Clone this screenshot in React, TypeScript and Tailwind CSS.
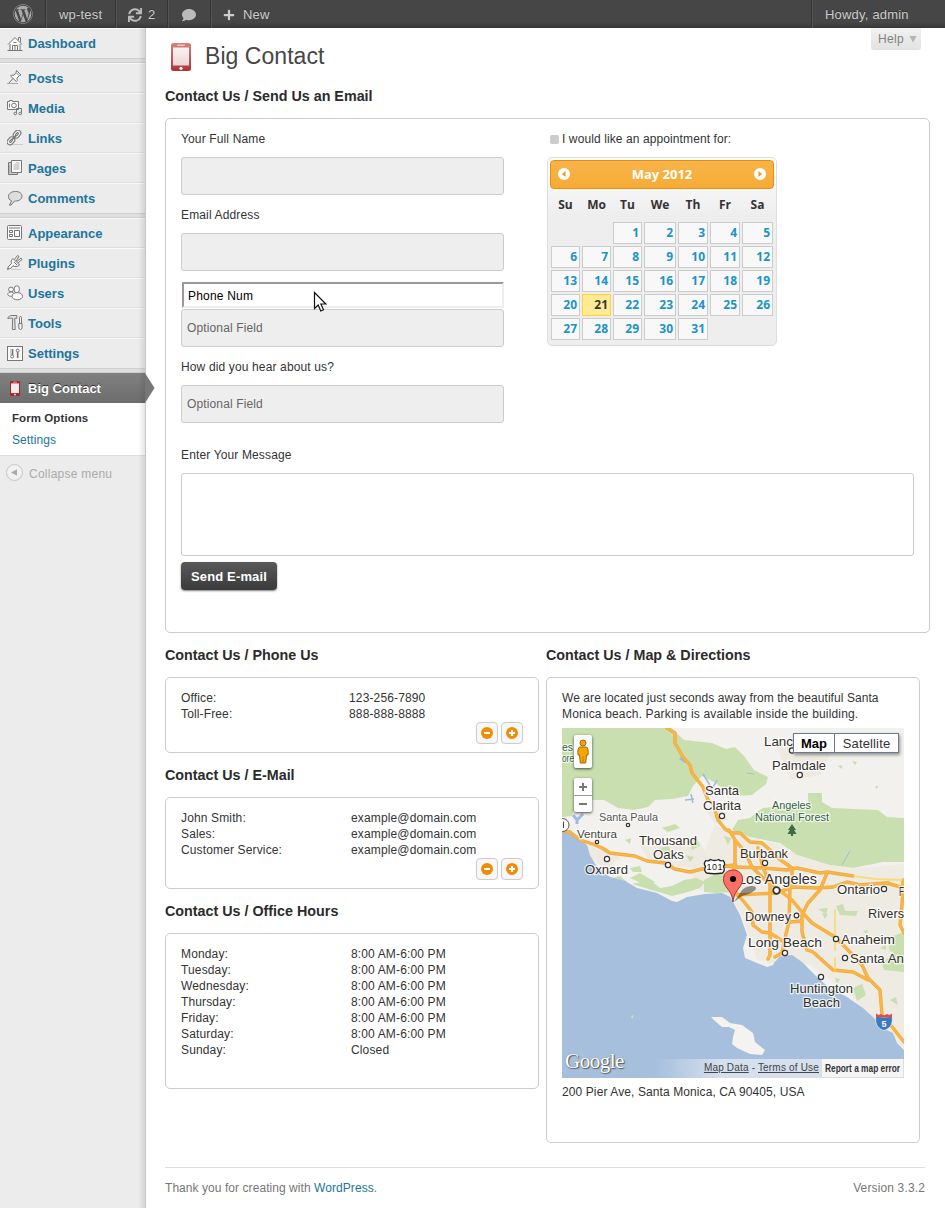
import React from "react";
import { FaWordpress, FaComment, FaPlus, FaSync } from "react-icons/fa";

type IconName =
  | "home" | "pin" | "media" | "link" | "pages" | "comment"
  | "appearance" | "plug" | "users" | "tools" | "settings";

const icons: Record<IconName, React.ReactNode> = {
  home: (
    <>
      <path d="M1 8.5 8 1.5l7 7M3 8v6.5h10V8M11.5 4.5v-3h2v5" fill="#fafafa" />
      <path d="M5.5 14.5v-5h5v5M8 9.5v5M6.5 6.500h3M0.500 14.500h15" />
    </>
  ),
  pin: (
    <>
      <path d="M9.500 .500 14 5l-1.500.5-2.500 2.500.3 2.500-1 1L3.500 6l1-1 2.500.3L9 2.500z" fill="#fafafa" />
      <path d="M6 8.500 1.500 13.500M9.500 3l2.500 2.500" />
      <path d="M0 13.500h11" stroke="#aaa" />
    </>
  ),
  media: (
    <>
      <path d="M0.500 1.500h2v-1h3v1h6v8h-11z" fill="#fafafa" />
      <circle cx="7" cy="5.500" r="2.300" />
      <path d="M2.500 3.500v4M9.500 13.500v-5h5v5" />
      <circle cx="8.200" cy="13.500" r="1.300" fill="#eee" />
      <circle cx="13.200" cy="13.500" r="1.300" fill="#eee" />
    </>
  ),
  link: (
    <>
      <path d="M5 14.500h11" stroke="#ccc" />
      <g transform="translate(-1 -.5) rotate(-48 8 8)" fill="#f5f5f5" strokeWidth="1.100">
        <rect x="-.8" y="5" width="8.500" height="6" rx="3" />
        <rect x="1.700" y="7.200" width="3.600" height="1.600" rx=".8" />
        <rect x="8.300" y="5" width="8.500" height="6" rx="3" />
        <rect x="10.700" y="7.200" width="3.600" height="1.600" rx=".8" />
        <path d="M5 8h6" strokeWidth="1.600" />
      </g>
    </>
  ),
  pages: (
    <>
      <path d="M4.500 2.500h-3v12h9v-2" fill="#ccc" />
      <path d="M4.500 0.500h10v12h-10z" fill="#fafafa" />
      <path d="M8.500 3h4M6.500 5h6M6.500 7h6M6.500 9h6M2.800 5v8" stroke="#aaa" />
    </>
  ),
  comment: (
    <path d="M8.500 .500c4 0 6.500 2 6.500 4.700S12.500 10 8.500 10l-1 .1-3.500 4h-1.500l2-4.300C2.300 8.800 1.500 7.500 1.500 5.200c0-2.700 3-4.700 7-4.700z" fill="#dedede" />
  ),
  appearance: (
    <>
      <rect x="0.500" y="0.500" width="14" height="14" rx="1" fill="#fafafa" />
      <path d="M2 3h11M2.500 5.500h3v2h-3zM2.500 9.500h3v2h-3zM7.500 5.500h5v6h-5z" />
    </>
  ),
  plug: (
    <>
      <path d="M4 14.500h10" stroke="#ccc" />
      <path d="M6 3.500 12.500 10c-2 2-5 2-6.500.8L3.500 13.500l-2.500.500L1 12l3.500-3.500C3.500 6.500 4.300 5.300 6 3.500z" fill="#f3f3f3" />
      <path d="m7.500 4.500 3-4 1.500 1-3 4.700M11 8l4-3.500-1-1.500-4 3.500M7 7l3 3M0 15l1.500-2" />
    </>
  ),
  users: (
    <>
      <circle cx="4" cy="4.500" r="2.400" fill="#fafafa" />
      <path d="M.8 9.500C.8 8 2 7 4.500 7S7 9 7 10.500s-6.200 1-6.200-1z" fill="#fafafa" />
      <rect x="7.300" y=".8" width="5" height="7" rx="2.500" fill="#fafafa" />
      <ellipse cx="10.300" cy="11.200" rx="5.300" ry="3.600" fill="#fafafa" />
    </>
  ),
  tools: (
    <>
      <path d="M.8 3.500c.5-2 2-3 4-3h5v2.800H7.700l.5 11.200H5.300l.4-11.200C4 3 2.500 3 .8 3.500z" fill="#e4e4e4" />
      <path d="M12.500 8V2.500l1-1.500 1 1.500V8M11.800 8.500h3.200v5l-1.500 1-1.700-1z" fill="#f4f4f4" />
    </>
  ),
  settings: (
    <>
      <rect x="0.500" y="0.500" width="15" height="14" fill="#fafafa" />
      <path d="M5.500 3v6M10.700 6v6" strokeWidth="1.700" />
      <circle cx="5.200" cy="10.500" r="1.500" />
      <circle cx="10.700" cy="4.500" r="1.500" />
      <path d="M3.500 3v6" stroke="#ccc" />
    </>
  ),
};

function MenuIcon({ name }: { name: IconName }) {
  return (
    <svg width="16" height="16" viewBox="0 0 16 16" fill="none" stroke="#777" strokeWidth="1">
      {icons[name]}
    </svg>
  );
}

function PhoneIcon({ w, h }: { w: number; h: number }) {
  return (
    <svg width={w} height={h} viewBox="0 0 20 28" preserveAspectRatio="none">
      <defs>
        <linearGradient id="phoneBody" x1="0" y1="0" x2="0" y2="1">
          <stop offset="0" stopColor="#d48280" />
          <stop offset="1" stopColor="#ae3336" />
        </linearGradient>
        <linearGradient id="phoneScreen" x1="0" y1="0" x2="0" y2="1">
          <stop offset="0" stopColor="#fbf3f3" />
          <stop offset="1" stopColor="#ecd5d5" />
        </linearGradient>
      </defs>
      <rect width="20" height="28" rx="2.500" fill={w > 15 ? "url(#phoneBody)" : "#a5282b"} />
      <rect x="2" y="4.500" width="16" height="18" fill={w > 15 ? "url(#phoneScreen)" : "#f5ecec"} />
      <rect x="6" y="1.500" width="8" height="1.500" rx=".7" fill="#ecc6c6" />
      <circle cx="10" cy="25.300" r="1.600" fill="#fff" />
    </svg>
  );
}

const Gap = () => (
  <div className="h-[5px] border-y border-[#cfcfcf] bg-[#dfdfdf]" />
);

function MenuGroup({ items }: { items: [IconName, string][] }) {
  return (
    <ul>
      {items.map(([icon, label], i) => (
        <li
          key={label}
          className={
            "flex h-[30px] items-center border-t border-t-[#f9f9f9] pl-[7px] " +
            (i < items.length - 1 ? "border-b border-b-[#dfdfdf]" : "")
          }
        >
          <MenuIcon name={icon} />
          <span className="mt-px ml-[5px] text-[13px] leading-4 font-bold tracking-normal text-[#21759b]">{label}</span>
        </li>
      ))}
    </ul>
  );
}

function Sidebar() {
  return (
    <nav className="relative w-[146px] shrink-0 border-r border-[#c6c6c6] bg-[#ececec]">
      <MenuGroup items={[["home", "Dashboard"]]} />
      <Gap />
      <MenuGroup
        items={[["pin", "Posts"], ["media", "Media"], ["link", "Links"], ["pages", "Pages"], ["comment", "Comments"]]}
      />
      <Gap />
      <MenuGroup
        items={[["appearance", "Appearance"], ["plug", "Plugins"], ["users", "Users"], ["tools", "Tools"], ["settings", "Settings"]]}
      />
      <Gap />
      <div className="relative flex h-[30px] items-center bg-linear-to-b from-[#808080] to-[#6d6d6d] pl-[10px]">
        <PhoneIcon w={10} h={15} />
        <span className="mt-px ml-2 text-[13px] leading-4 font-bold tracking-normal text-white [text-shadow:0_-1px_0_#333]">Big Contact</span>
        <svg className="absolute top-0 left-[145px] z-10" width="10" height="30" viewBox="0 0 10 30">
          <path d="M0 0 9.500 15 0 30z" fill="#777" />
        </svg>
      </div>
      <div className="h-[53px] border-b border-[#dfdfdf] bg-white pt-[4px] pl-3 leading-[22px]">
        <div className="text-[11.500px] font-bold tracking-[0.080px] text-[#333]">Form Options</div>
        <div className="tracking-[0.080px] text-[#21759b]">Settings</div>
      </div>
      <div className="flex h-[34px] items-center pl-[6px]">
        <svg width="17" height="17" viewBox="0 0 17 17" className="mb-px">
          <circle cx="8.500" cy="8.500" r="8" fill="#f1f1f1" stroke="#c4c4c4" />
          <path d="M5 8.500 11 5.200v6.600z" fill="#aaa" />
        </svg>
        <span className="mt-px ml-[6px] tracking-[0.250px] text-[#aaa]">Collapse menu</span>
      </div>
      <div className="pointer-events-none absolute top-0 right-0 h-full w-[7px] bg-linear-to-r from-transparent to-black/10" />
    </nav>
  );
}

function AdminBar() {
  const sep = "flex h-full items-center border-r border-[#333] shadow-[1px_0_0_#555]";
  return (
    <header className="flex h-7 shrink-0 items-center bg-linear-to-b from-[#464646] from-80% to-[#373737] text-[13px] tracking-[0.200px] text-[#ccc] [text-shadow:0_-1px_0_#333]">
      <div className={sep + " w-[46px] justify-center"}>
        <FaWordpress size={20} color="#aaa" />
      </div>
      <div className={sep + " w-[70px] pl-[13px] pt-px"}>wp-test</div>
      <div className={sep + " w-[52px] gap-[6px] pl-3 pt-px"}>
        <FaSync size={14} color="#bbb" />2
      </div>
      <div className={sep + " w-[43px] justify-center pt-px"}>
        <FaComment size={14} color="#bbb" />
      </div>
      <div className="flex items-center gap-2 pt-px pl-[12px]">
        <FaPlus size={12} color="#ccc" />New
      </div>
      <div className="ml-auto flex h-full w-[133px] items-center border-l border-[#555] pt-px pl-3 shadow-[-1px_0_0_#333]">
        Howdy, admin
      </div>
    </header>
  );
}

const H = ({ children }: { children: React.ReactNode }) => (
  <h3 className="h-[22px] text-[15px] leading-[22px] font-bold tracking-normal whitespace-nowrap text-[#2b2b2b]">
    <span className="inline-block origin-left scale-x-[.954]">{children}</span>
  </h3>
);

const field =
  "block h-[38px] w-[323px] rounded-[3px] border border-[#ccc] bg-[#eee] px-[5px] text-[#555] tracking-[0.130px] placeholder:text-[#666] placeholder:opacity-100";
const label = "block h-4 leading-4 text-[#333]";

const weeks: (number | null)[] = [null, null, ...Array.from({ length: 31 }, (_, i) => i + 1)];

function Arrow({ flip }: { flip?: boolean }) {
  return (
    <svg width="12" height="12" viewBox="0 0 12 12" className={flip ? "mb-px rotate-180" : "mb-px"}>
      <circle cx="6" cy="6" r="6" fill="#fff" />
      <path d="M7.500 3v6L4 6z" fill="#f2980f" />
    </svg>
  );
}

const cols = "grid grid-cols-[29px_29px_29px_32px_30px_30px_31px] gap-x-[2px]";

function Calendar() {
  return (
    <div className="h-[189px] w-[230px] rounded-[5px] border border-[#ddd] bg-linear-to-b from-[#fff] to-[#eee] to-30% p-[2px] font-[Open_Sans,sans-serif] font-bold tracking-normal">
      <div className="flex h-[29px] items-center justify-between rounded-[4px] border border-[#e78f08] bg-linear-to-b from-[#f8b44a] to-[#f6ab34] px-[7px] text-[13px] text-white">
        <Arrow />
        <span>May 2012</span>
        <Arrow flip />
      </div>
      <div className={cols + " mt-[5px] h-[22px] pl-px text-center text-[12px] leading-[22px] text-[#333]"}>
        {["Su", "Mo", "Tu", "We", "Th", "Fr", "Sa"].map((d) => (
          <span key={d}>{d}</span>
        ))}
      </div>
      <div className={cols + " mt-[6px] gap-y-[2px] pl-px text-right text-[12px] leading-[20px]"}>
        {weeks.map((d, i) =>
          d === null ? (
            <span key={"e" + i} />
          ) : d === 21 ? (
            <span key={d} className="h-[22px] border border-[#fed22f] bg-[#ffeb95] pr-[2px] text-[#363636]">{d}</span>
          ) : (
            <span key={d} className="h-[22px] border border-[#ccc] bg-[#f8f8f8] pr-[2px] text-[#1c94c4]">{d}</span>
          )
        )}
      </div>
    </div>
  );
}

function PlusMinus() {
  const btn = "flex h-[22px] w-[22px] items-center justify-center rounded-[4px] border border-[#ccc] bg-[#f7f7f7]";
  return (
    <div className="-mr-[15px] flex justify-end gap-[3px] pr-[15px]">
      {["M3 6h6", "M3 6h6M6 3v6"].map((d) => (
        <span key={d} className={btn}>
          <svg width="12" height="12" viewBox="0 0 12 12">
            <circle cx="6" cy="6" r="6" fill="#ef8c08" />
            <path d={d} stroke="#fff" strokeWidth="2" />
          </svg>
        </span>
      ))}
    </div>
  );
}

function Rows({ rows, first }: { rows: [string, string][]; first: string }) {
  return (
    <dl className="leading-4">
      {rows.map(([a, b]) => (
        <div key={a} className="flex">
          <dt className={first}>{a}</dt>
          <dd>{b}</dd>
        </div>
      ))}
    </dl>
  );
}

const panel = "rounded-[5px] border border-[#ccc] px-[15px] pt-3";

const roads = [
  "M667 728 675 733 675 743 683 757 690 765 692 773 703 787 708 800 713 804 718 820 725 829 732 833",
  "M562 831 570 832 580 840 593 844 602 848 610 853 635 856 647 861 665 863 675 869 690 872 702 869 725 866 735 867",
  "M732 833 740 833 750 842 762 843 770 850 778 858 792 868 792 877 790 888 789 922 785 938 782 953 775 957",
  "M729 830 735 840 735 865 731 885 738 895 745 903 752 912 753 925 762 932 770 933 784 942",
  "M735 840 745 852 752 867 762 877 775 887 783 893 792 900 802 912 812 923 835 937 848 950 862 965 868 978 880 990 882 1015 893 1028 904 1042",
  "M735 867 763 868 787 870 797 868 820 873 827 872 853 876",
  "M737 895 775 893 785 890 792 887 817 888 833 887 847 882 860 885 887 883 904 888",
  "M758 848 763 867 770 885 770 955 768 959",
  "M827 873 820 890 808 903 802 915 802 932 807 950 813 952 833 970 853 972 868 980",
  "M790 922 802 921M735 865 725 866M903 880 902 905 900 925 904 933",
];

type Place = [string, number, number, number, number?, string?];
const places: Place[] = [
  ["Lanc", 764, 745.500, 29],
  ["Palmdale", 772, 769.5, 54],
  ["Santa", 705, 795, 34],
  ["Clarita", 703, 810, 38],
  ["Angeles", 772, 808.5, 39, 11, "#2f6340"],
  ["National Forest", 755, 821, 74, 11, "#2f6340"],
  ["Santa Paula", 599, 821, 59, 11, "#555"],
  ["Ventura", 577, 838, 40, 11, "#444"],
  ["Thousand", 639, 844.5, 58],
  ["Oaks", 653, 858.5, 31],
  ["Oxnard", 585, 873.5, 43],
  ["Burbank", 740, 857.5, 48],
  ["Los Angeles", 738, 884, 79, 14],
  ["Ontario", 837, 893.5, 43],
  ["F", 899, 896, 5],
  ["Downey", 745, 920.5, 46],
  ["Rivers", 868, 917.5, 36],
  ["Long Beach", 748, 946.5, 74, 13.5],
  ["Anaheim", 841, 943.5, 54],
  ["Santa An", 850, 962.5, 54],
  ["Huntington", 790, 992.5, 63],
  ["Beach", 803, 1006.5, 37],
  ["es", 562, 750.500, 11, 11, "#2f6340"],
  ["ore", 562, 762, 12, 11, "#2f6340"],
];

const dots: [number, number, number][] = [
  [792, 750.5, 2.6], [799.800, 775, 2.6], [722, 816, 2.6], [628, 825, 1.700], [597, 842, 1.700], [607, 859, 2.6],
  [668, 865, 2.6], [765, 863, 2.6], [776.500, 890.500, 3.3], [884, 889, 2.6], [796.500, 915.500, 2.3], [785, 953, 2.6],
  [836, 939, 2.6], [845, 958, 2.6], [821, 977, 2.6],
];

const greens = [
  "M660 848 668 846 672 852 664 856ZM690 842 697 838 700 846 692 850ZM612 878 620 876 627 882 618 885ZM630 878 640 873 655 882 648 886Z",
  "M632 884 650 880 660 888 672 886 684 880 696 878 705 882 700 888 688 892 672 896 655 891Z",
  "M704 880 714 875 722 872 730 878 733 884 732 892 716 893 704 892ZM724 836 731 838 728 845ZM686 855 694 857 690 862ZM630 868 640 866 642 872 633 872ZM625 840 631 838 630 844ZM662 828 675 824 680 828 668 832Z",
  "M808 793 822 793 822 802 832 808 878 810 887 817 904 818 904 862 883 862 853 868 830 865 797 855 780 843 750 837 732 830 738 820 750 818 757 812 763 808 808 803Z",
  "M836 906 843 904 845 911 858 911 856 916 840 915ZM818 909 828 908 826 914ZM802 875 808 876 806 880ZM822 913 828 914 825 919ZM880 882 890 880 888 886Z",
  "M888 938 904 932 904 972 884 970 882 963 892 955 889 948ZM853 988 862 984 866 995 857 1001ZM880 948 886 945 886 950ZM863 931 868 930 867 934ZM835 978 840 979 837 984Z",
  "M838 766 842 765 842 769ZM852 761 857 762 855 765ZM875 786 878 786 877 789ZM836 741 840 742 838 744ZM890 1000 896 997 898 1005Z",
];

function MapView() {
  return (
    <div className="relative h-[350px] w-[342px] overflow-hidden tracking-normal">
      <svg width="342" height="350" viewBox="562 728 342 350" className="block font-[Liberation_Sans,Arial,sans-serif]">
        <rect x="562" y="728" width="342" height="350" fill="#f3f1ed" />
        <path d="M562 728H671L684 740 712 743 726 749 735 747 744 756 754 770 768 777 766 784 752 795 737 796 725 790 714 782 702 776 693 786 688 796 672 799 655 800 648 807 634 810 618 808 604 800 592 800 575 806 572 816 562 817Z" fill="#c9dfaf" />
        <path d="M715 825 730 832 750 838 780 844 800 857 850 869 904 864 904 1048 880 1025 850 995 810 965 757 960 740 910 722 892 700 890 690 870 705 850Z" fill="#eeebe2" />
        <path d="M640 846 700 842 710 860 690 868 650 862ZM580 840 604 846 620 858 605 870 592 858ZM776 745 806 740 830 755 820 775 790 780ZM706 810 722 806 728 820 715 824Z" fill="#eeeae1" />
        {greens.map((d) => (
          <path key={d} d={d} fill="#c9dfaf" />
        ))}
        <path
          d="M562 831 570 832 580 840 587 845 590 855 597 867 610 877 625 881 637 888 657 893 672 901 677 902 687 897 705 894 722 893 730 897 733 902 740 915 747 935 743 948 745 958 757 963 767 967 773 965 777 957 792 955 802 962 812 972 820 980 830 988 847 997 863 1008 873 1017 882 1028 893 1033 897 1043 904 1050V1078H562Z"
          fill="#a5bfdd"
        />
        <path d="M764 958 770 960 774 955 780 956 776 961 769 965Z" fill="#ece9df" />
        <path d="M711 1017 722 1017 730 1023 742 1025 753 1033 755 1042 765 1050 762 1055 750 1054 737 1048 732 1044 733 1037 735 1030 729 1027 722 1027 716 1022Z" fill="#f4f3ef" />
        <path d="M631 1016 634 1015 632 1019Z" fill="#c9dfaf" />
        <g fill="none" stroke="#9dbbe0">
          <path d="M573 815 578 821M583 814 577 820 577 824M680 758 686 762" strokeWidth="3" />
          <path d="M703 774 708 782 712 789 717 780M711 789 708 793M685 800 694 799M691 794 693 803" strokeWidth="1.500" />
          <path d="M842 865 850 851M747 773 754 774" strokeWidth="1" />
        </g>
        <g fill="none" strokeLinejoin="round" strokeLinecap="round">
          {roads.map((d) => (
            <path key={d} d={d} stroke="#e9a94a" strokeWidth="3.400" />
          ))}
          <path d="M853 876 875 879 904 880M835 910V950M835 958V972" stroke="#f8dc7c" strokeWidth="1.800" />
          {roads.map((d) => (
            <path key={"i" + d} d={d} stroke="#fdb53f" strokeWidth="2.200" />
          ))}
        </g>
        <path d="M792 824 796 830h-2l2.500 4H787.500l2.500-4h-2zM791 834h2v2h-2z" fill="#3f6b4a" />
        {places.map(([t, x, y, w, size, color]) => (
          <text
            key={t + y}
            x={x}
            y={y}
            textLength={w}
            lengthAdjust="spacingAndGlyphs"
            fontSize={size ?? 13}
            fill={color ?? "#33302e"}
            stroke="#fff"
            strokeOpacity=".75"
            strokeWidth="2.500"
            paintOrder="stroke"
          >
            {t}
          </text>
        ))}
        {dots.map(([x, y, r]) => (
          <circle key={x + "-" + y} cx={x} cy={y} r={r} fill="#fff" stroke="#333" strokeWidth={r > 3 ? 1.800 : 1.200} />
        ))}
        <path d="M706 860.500q2.500 1 4.500-1 4 2 8 0 2 2 4.500 1 3 3 .5 6 2 4-1 6.500-8 1.500-16 0-3-2.500-1-6.500-2.500-3 .5-6z" fill="#fff" stroke="#222" strokeWidth="1.300" />
        <text x="706.500" y="870" fontSize="9" textLength="16" fill="#222">101</text>
        <rect x="552" y="818.500" width="17" height="13" rx="6.500" fill="#fff" stroke="#555" />
        <path d="M563.500 821.500v6.500" stroke="#444" />
        <path d="M876 1016c5 1.500 11 1.500 16 0 1 6 0 12-8 14.500-8-2.500-9-8.500-8-14.500z" fill="#3a78c4" stroke="#fff" strokeWidth=".6" />
        <path d="M876 1017.500v-4l2.500 1.500 2.500-1 3 1.500 3-1.500 2.500 1 2.500-1.500v4z" fill="#d8504d" />
        <text x="881.500" y="1026.500" fontSize="9" fontWeight="bold" fill="#fff">5</text>
        <path d="M734 902 742 890c5-5 14-5 14-2s-8 7-14 8z" fill="#000" opacity=".4" />
        <path d="M733 902c-1-8-3-10-6-14-4-5-4-9-3-12 2-8 16-8 18 0 1 3 1 7-3 12-3 4-5 6-6 14z" fill="#fb7064" stroke="#9e3630" />
        <circle cx="733" cy="879" r="3" fill="#000" />
      </svg>
      <div className="absolute top-[7px] left-3 flex h-[33px] w-[18px] items-center justify-center rounded-[2px] bg-white shadow-[0_1px_3px_#444]">
        <svg width="12" height="26" viewBox="0 0 12 26">
          <path d="M2.500 8h7C11 9 11.500 12 11 16H9.500l-.8 8H3.300l-.8-8H1C.5 12 1 9 2.500 8z" fill="#f5a700" stroke="#a4650d" />
          <path d="M6 17v7" stroke="#c47d0a" />
          <circle cx="6" cy="4" r="3" fill="#f5a700" stroke="#a4650d" />
        </svg>
      </div>
      <div className="absolute top-[50px] left-3 flex h-[34px] w-[18px] flex-col rounded-[2px] bg-white shadow-[0_1px_3px_#444]">
        <svg width="18" height="34" viewBox="0 0 18 34">
          <path d="M5 9h8M9 5v8M5 26h8" stroke="#777" strokeWidth="2" />
          <path d="M0 17.500h18" stroke="#999" />
        </svg>
      </div>
      <div className="absolute top-[5px] right-[5px] flex h-5 border border-[#6b7a90] bg-white text-[13px] leading-[19px] text-[#333] shadow-[1px_2px_3px_rgba(0,0,0,.4)]">
        <span className="w-[41px] border-r border-[#6b7a90] text-center font-bold text-black">Map</span>
        <span className="w-[63px] text-center tracking-[0.150px]">Satellite</span>
      </div>
      <div className="absolute bottom-[5px] left-[3px] font-[Liberation_Serif,serif] text-[21px] leading-[24px] tracking-[-0.500px] text-white [text-shadow:1px_1px_1px_#555,0_0_1px_#777]">
        Google
      </div>
      <div className="absolute right-0 bottom-0 flex h-[19px] items-center text-[10px] leading-[18px] text-[#444]">
        <div className="h-full bg-linear-to-r from-transparent to-[#d5e0ee] to-40% pr-[3px] pl-[50px] tracking-[0.180px] whitespace-nowrap">
          <u>Map Data</u> - <u>Terms of Use</u>
        </div>
        <div className="flex h-full w-[82px] justify-center border-r border-b border-[#ddd] bg-[#f5f5f5]">
          <svg width="80" height="18">
            <text x="2" y="12.500" fontSize="10" fontWeight="bold" textLength="75" lengthAdjust="spacingAndGlyphs" fill="#333">Report a map error</text>
          </svg>
        </div>
      </div>
    </div>
  );
}

function ContactForm() {
  return (
    <section className="flex h-[515px] w-[765px] rounded-[5px] border border-[#ccc] px-[15px] pt-3">
      <form className="relative w-full">
        <div className="flex">
          <div className="w-[366px]">
            <label className={label}>Your Full Name</label>
            <input className={field + " mt-[10px]"} />
            <label className={label + " mt-3"}>Email Address</label>
            <input className={field + " mt-[10px]"} />
            <input
              defaultValue="Phone Num"
              className="mt-[11px] ml-px block h-[26px] w-[322px] border-2 border-t-[#999] border-r-[#eee] border-b-[#eee] border-l-[#999] bg-white px-1 pt-px tracking-[0.200px] text-black"
            />
            <input placeholder="Optional Field" className={field + " mt-px"} />
            <label className={label + " mt-3"}>How did you hear about us?</label>
            <input placeholder="Optional Field" className={field + " mt-[10px]"} />
          </div>
          <div>
            <div className="flex h-4 items-center pl-[3px] leading-4 tracking-[0.100px] text-[#333]">
              <span className="mr-[3px] h-[9px] w-[9px] rounded-[2px] bg-[#ccc]" />
              I would like an appointment for:
            </div>
            <div className="mt-[10px]">
              <Calendar />
            </div>
          </div>
        </div>
        <label className={label + " mt-6"}>Enter Your Message</label>
        <textarea className="mt-[10px] block h-[83px] w-[733px] resize-none rounded-[3px] border border-[#ccc] bg-white" />
        <button
          type="button"
          className="mt-[6px] block h-[28px] w-[96px] rounded-[4px] bg-linear-to-b from-[#5a5a5a] to-[#3a3a3a] pt-px text-[13px] font-bold tracking-[0.150px] whitespace-nowrap text-white shadow-[0_1px_2px_rgba(0,0,0,.5)]"
        >
          Send E-mail
        </button>
        <svg className="absolute top-[160px] left-[132px]" width="14" height="22" viewBox="0 0 14 22">
          <path d="M1.500 1.500v16l3.700-3.500 2.600 6 2.700-1.200-2.600-5.800h5z" fill="#fff" stroke="#111" strokeWidth="1.200" />
        </svg>
      </form>
    </section>
  );
}

const days = ["Monday:", "Tuesday:", "Wednesday:", "Thursday:", "Friday:", "Saturday:"];

export default function App() {
  return (
    <div className="flex h-[1208px] w-[945px] flex-col overflow-hidden bg-white font-[Liberation_Sans,Arial,sans-serif] text-[12px] tracking-[0.140px] text-[#333]">
      <AdminBar />
      <div className="flex flex-1">
        <Sidebar />
        <main className="relative flex-1 pl-[19px]">
          <div className="absolute top-0 right-6 h-[22px] w-[50px] rounded-b-[3px] bg-linear-to-b from-[#f1f1f1] to-[#e2e2e2] pl-[7px] leading-[22px] tracking-[0.300px] text-[#808080]">
            Help
            <svg className="absolute top-[7px] right-[4px]" width="8" height="8" viewBox="0 0 8 8">
              <path d="M.5 1h7L4 7.500z" fill="#b5b5b5" />
            </svg>
          </div>
          <div className="flex h-[57px] items-center pl-[6px] tracking-normal">
            <PhoneIcon w={20} h={28} />
            <h2 className="mb-px ml-[14px] text-[23px] leading-[34px] tracking-[0.050px] text-[#464646]">Big Contact</h2>
          </div>
          <H>Contact Us / Send Us an Email</H>
          <div className="h-[11px]" />
          <ContactForm />
          <div className="flex gap-[7px] pt-[11px]">
            <div className="w-[374px]">
              <H>Contact Us / Phone Us</H>
              <div className={panel + " mt-[11px] h-[76px]"}>
                <Rows first="w-[168px]" rows={[["Office:", "123-256-7890"], ["Toll-Free:", "888-888-8888"]]} />
                <PlusMinus />
              </div>
              <div className="h-[11px]" />
              <H>Contact Us / E-Mail</H>
              <div className={panel + " mt-[11px] h-[92px]"}>
                <Rows
                  first="w-[170px]"
                  rows={[["John Smith:", "example@domain.com"], ["Sales:", "example@domain.com"], ["Customer Service:", "example@domain.com"]]}
                />
                <PlusMinus />
              </div>
              <div className="h-[11px]" />
              <H>Contact Us / Office Hours</H>
              <div className={panel + " mt-[11px] h-[156px]"}>
                <Rows
                  first="w-[170px]"
                  rows={[...days.map((d): [string, string] => [d, "8:00 AM-6:00 PM"]), ["Sunday:", "Closed"]]}
                />
              </div>
            </div>
            <div className="w-[374px]">
              <H>Contact Us / Map &amp; Directions</H>
              <div className={panel + " mt-[11px] h-[466px]"}>
                <p className="h-[38px] leading-4 tracking-[0.070px] whitespace-nowrap">
                  We are located just seconds away from the beautiful Santa
                  <br />
                  <span className="tracking-[0.160px]">Monica beach. Parking is available inside the building.</span>
                </p>
                <MapView />
                <p className="mt-[6px] leading-4 tracking-[0.100px]">200 Pier Ave, Santa Monica, CA 90405, USA</p>
              </div>
            </div>
          </div>
          <footer className="mt-6 mr-5 flex justify-between border-t border-[#dfdfdf] pt-3 leading-4 text-[#777]">
            <span className="tracking-[0.060px]">
              Thank you for creating with <span className="text-[#21759b]">WordPress</span>.
            </span>
            <span>Version 3.3.2</span>
          </footer>
        </main>
      </div>
    </div>
  );
}
